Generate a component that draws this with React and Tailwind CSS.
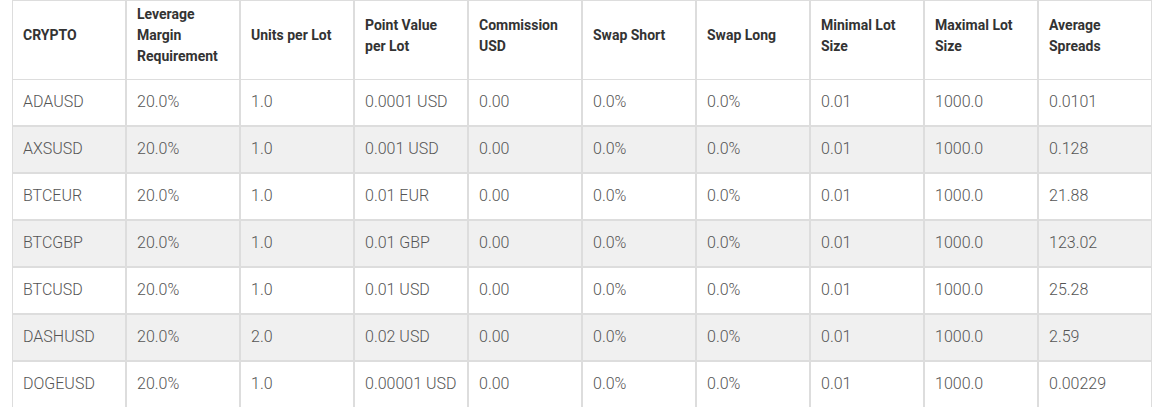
export default function App() {
  const headers = [
    "CRYPTO",
    "Leverage Margin Requirement",
    "Units per Lot",
    "Point Value per Lot",
    "Commission USD",
    "Swap Short",
    "Swap Long",
    "Minimal Lot Size",
    "Maximal Lot Size",
    "Average Spreads",
  ];
  const rows = [
    ["ADAUSD", "20.0%", "1.0", "0.0001 USD", "0.00", "0.0%", "0.0%", "0.01", "1000.0", "0.0101"],
    ["AXSUSD", "20.0%", "1.0", "0.001 USD", "0.00", "0.0%", "0.0%", "0.01", "1000.0", "0.128"],
    ["BTCEUR", "20.0%", "1.0", "0.01 EUR", "0.00", "0.0%", "0.0%", "0.01", "1000.0", "21.88"],
    ["BTCGBP", "20.0%", "1.0", "0.01 GBP", "0.00", "0.0%", "0.0%", "0.01", "1000.0", "123.02"],
    ["BTCUSD", "20.0%", "1.0", "0.01 USD", "0.00", "0.0%", "0.0%", "0.01", "1000.0", "25.28"],
    ["DASHUSD", "20.0%", "2.0", "0.02 USD", "0.00", "0.0%", "0.0%", "0.01", "1000.0", "2.59"],
    ["DOGEUSD", "20.0%", "1.0", "0.00001 USD", "0.00", "0.0%", "0.0%", "0.01", "1000.0", "0.00229"],
  ];
  return (
    <div className="bg-white pl-[12px]" style={{ fontFamily: "Roboto, 'Liberation Sans', sans-serif" }}>
      <table className="table-fixed w-[1140px] border-separate border-spacing-0">
        <colgroup>
          {headers.map((_, i) => (
            <col key={i} className="w-[114px]" />
          ))}
        </colgroup>
        <thead>
          <tr>
            {headers.map((h, i) => (
              <th
                key={i}
                className="h-[78px] border border-b-0 border-[#dddddd] pl-[10px] pr-[8px] pt-[3px] pb-[12px] text-left align-middle text-[14px] leading-[21px] font-bold text-[#333333]"
              >
                {h}
              </th>
            ))}
          </tr>
        </thead>
        <tbody>
          {rows.map((r, ri) => (
            <tr key={ri} className={ri % 2 === 1 ? "bg-[#f0f0f0]" : "bg-white"}>
              {r.map((c, ci) => (
                <td
                  key={ci}
                  className="h-[47px] border border-[#dddddd] pl-[10px] pr-[4px] pb-[2px] align-middle text-[16px] leading-[22px] font-light text-[#555555] whitespace-nowrap"
                >
                  {c}
                </td>
              ))}
            </tr>
          ))}
        </tbody>
      </table>
    </div>
  );
}
